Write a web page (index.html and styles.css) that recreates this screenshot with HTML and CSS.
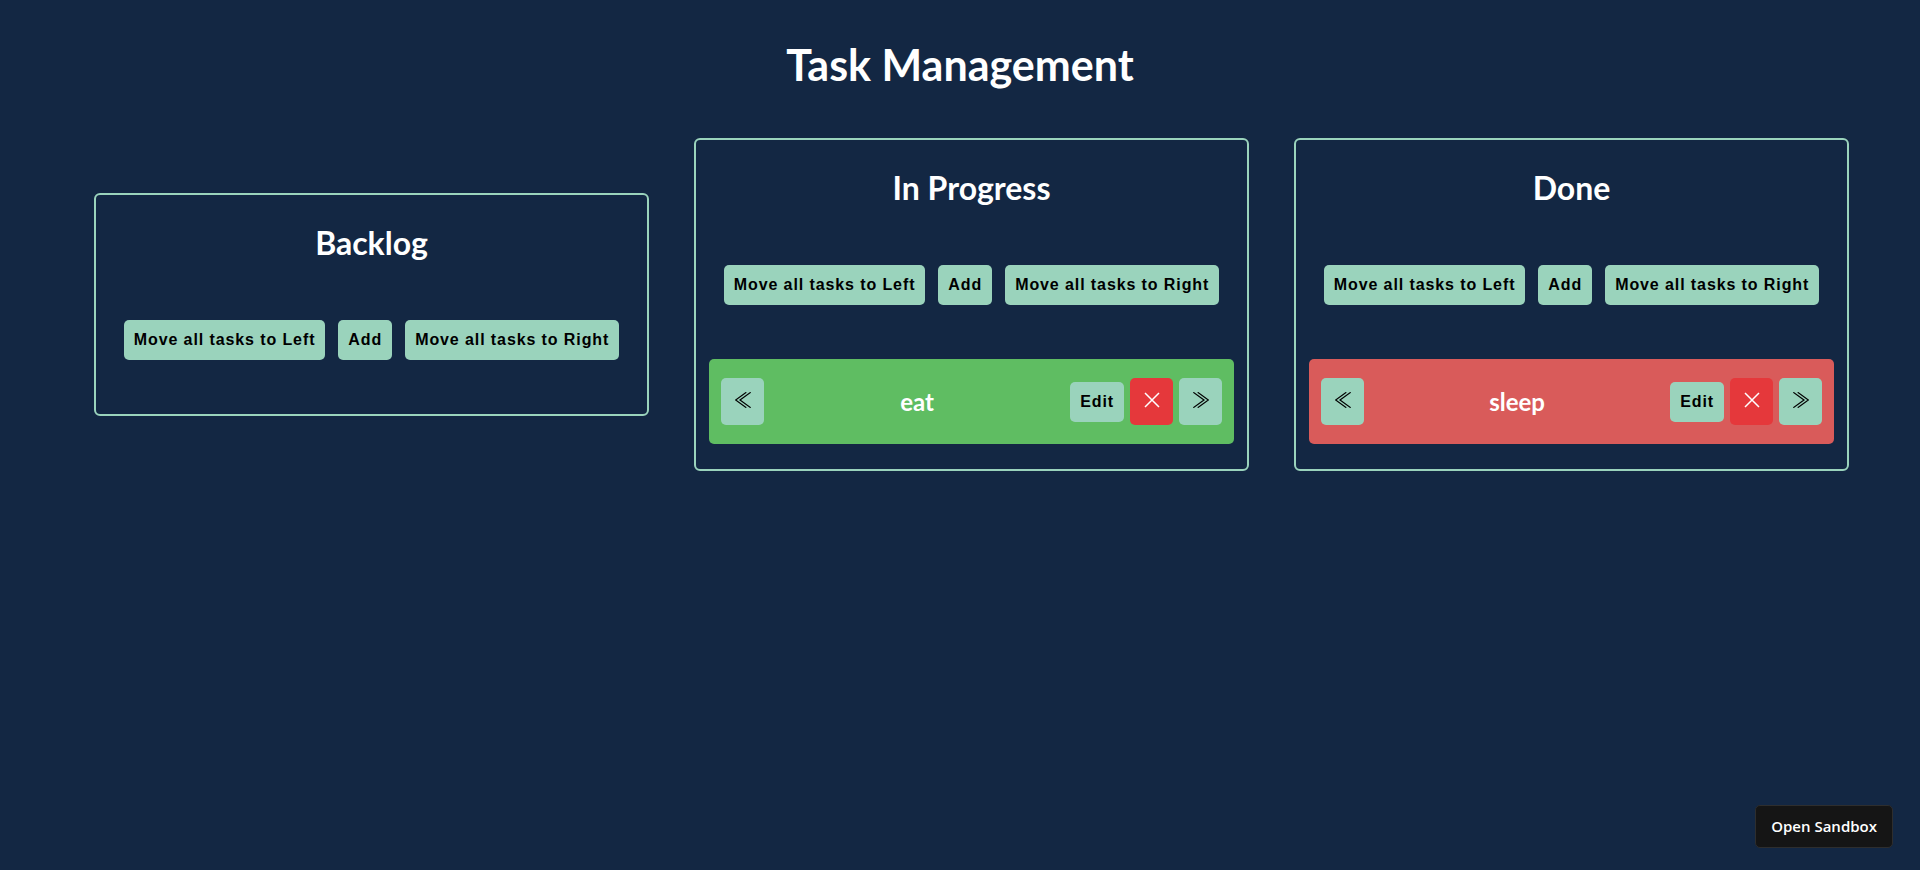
FILE: index.html
```html
<!DOCTYPE html>
<html lang="en">
<head>
<meta charset="utf-8">
<title>Task Management</title>
<link rel="stylesheet" href="styles.css">
</head>
<body>
<h1 class="title">Task Management</h1>
<main class="board">
  <section class="column">
    <h2 class="column-title">Backlog</h2>
    <div class="column-actions">
      <button class="btn">Move all tasks to Left</button>
      <button class="btn">Add</button>
      <button class="btn">Move all tasks to Right</button>
    </div>
  </section>

  <section class="column">
    <h2 class="column-title">In Progress</h2>
    <div class="column-actions">
      <button class="btn">Move all tasks to Left</button>
      <button class="btn">Add</button>
      <button class="btn">Move all tasks to Right</button>
    </div>
    <ul class="task-list">
      <li class="task task--green">
        <button class="icon-btn" aria-label="Move left">
          <svg class="icon" viewBox="0 0 16 16" width="16" height="16"><path d="M11.3 0.3 L0.6 8 L11.3 15.7 M15.7 0.3 L5 8 L15.7 15.7" fill="none" stroke="#000" stroke-width="1.2"/></svg>
        </button>
        <span class="task-name">eat</span>
        <button class="btn">Edit</button>
        <button class="icon-btn icon-btn--danger" aria-label="Delete">
          <svg class="icon" viewBox="0 0 16 16" width="16" height="16"><path d="M1 1 L15 15 M15 1 L1 15" fill="none" stroke="#fff" stroke-width="1.5"/></svg>
        </button>
        <button class="icon-btn" aria-label="Move right">
          <svg class="icon" viewBox="0 0 16 16" width="16" height="16"><path d="M4.7 0.3 L15.4 8 L4.7 15.7 M0.3 0.3 L11 8 L0.3 15.7" fill="none" stroke="#000" stroke-width="1.2"/></svg>
        </button>
      </li>
    </ul>
  </section>

  <section class="column">
    <h2 class="column-title">Done</h2>
    <div class="column-actions">
      <button class="btn">Move all tasks to Left</button>
      <button class="btn">Add</button>
      <button class="btn">Move all tasks to Right</button>
    </div>
    <ul class="task-list">
      <li class="task task--red">
        <button class="icon-btn" aria-label="Move left">
          <svg class="icon" viewBox="0 0 16 16" width="16" height="16"><path d="M11.3 0.3 L0.6 8 L11.3 15.7 M15.7 0.3 L5 8 L15.7 15.7" fill="none" stroke="#000" stroke-width="1.2"/></svg>
        </button>
        <span class="task-name">sleep</span>
        <button class="btn">Edit</button>
        <button class="icon-btn icon-btn--danger" aria-label="Delete">
          <svg class="icon" viewBox="0 0 16 16" width="16" height="16"><path d="M1 1 L15 15 M15 1 L1 15" fill="none" stroke="#fff" stroke-width="1.5"/></svg>
        </button>
        <button class="icon-btn" aria-label="Move right">
          <svg class="icon" viewBox="0 0 16 16" width="16" height="16"><path d="M4.7 0.3 L15.4 8 L4.7 15.7 M0.3 0.3 L11 8 L0.3 15.7" fill="none" stroke="#000" stroke-width="1.2"/></svg>
        </button>
      </li>
    </ul>
  </section>
</main>
<button class="sandbox-btn">Open Sandbox</button>
</body>
</html>
```

FILE: styles.css
```css
html, body {
  margin: 0;
  padding: 0;
}

body {
  background: #132743;
  min-height: 100vh;
  font-family: Lato, "Liberation Sans", sans-serif;
}

.title {
  margin: 39px 0 47px;
  text-align: center;
  color: #ffffff;
  font-size: 43px;
  line-height: 52px;
  font-weight: 700;
}

.board {
  display: flex;
  align-items: center;
  gap: 45px;
  padding-left: 94px;
}

.column {
  width: 555px;
  box-sizing: border-box;
  border: 2px solid #9ad3bc;
  border-radius: 6px;
  padding: 0 13px;
}

.column-title {
  margin: 28px 0 57px;
  text-align: center;
  color: #ffffff;
  font-size: 32px;
  line-height: 40px;
  font-weight: 700;
}

.column-actions {
  display: flex;
  justify-content: center;
  gap: 13px;
  margin-bottom: 54px;
}

.btn {
  font-family: "Liberation Sans", Arial, sans-serif;
  font-weight: 700;
  font-size: 16px;
  line-height: 18px;
  letter-spacing: 0.9px;
  padding: 11px 10px;
  border: none;
  border-radius: 5px;
  background: #9ad3bc;
  color: #000000;
}

.task-list {
  list-style: none;
  margin: 0 0 25px;
  padding: 0;
}

.task {
  display: flex;
  align-items: center;
  gap: 6px;
  padding: 19px 12px;
  border-radius: 5px;
}

.task--green {
  background: #5fbd62;
}

.task--red {
  background: #d95b5a;
}

.task-name {
  flex: 1;
  text-align: center;
  color: #ffffff;
  font-size: 24px;
  font-weight: 700;
}

.icon-btn {
  width: 43px;
  height: 47px;
  display: flex;
  align-items: center;
  justify-content: center;
  padding: 0;
  border: none;
  border-radius: 5px;
  background: #9ad3bc;
}

.icon-btn--danger {
  background: #e5383b;
}

.icon {
  display: block;
  margin-bottom: 3px;
}

.sandbox-btn {
  position: fixed;
  right: 27px;
  bottom: 22px;
  font-family: "Open Sans", "Liberation Sans", sans-serif;
  font-weight: 600;
  font-size: 15px;
  line-height: 21px;
  padding: 10px 15px;
  color: #ffffff;
  background: #151515;
  border: 1px solid #2e2e2e;
  border-radius: 5px;
}
```
